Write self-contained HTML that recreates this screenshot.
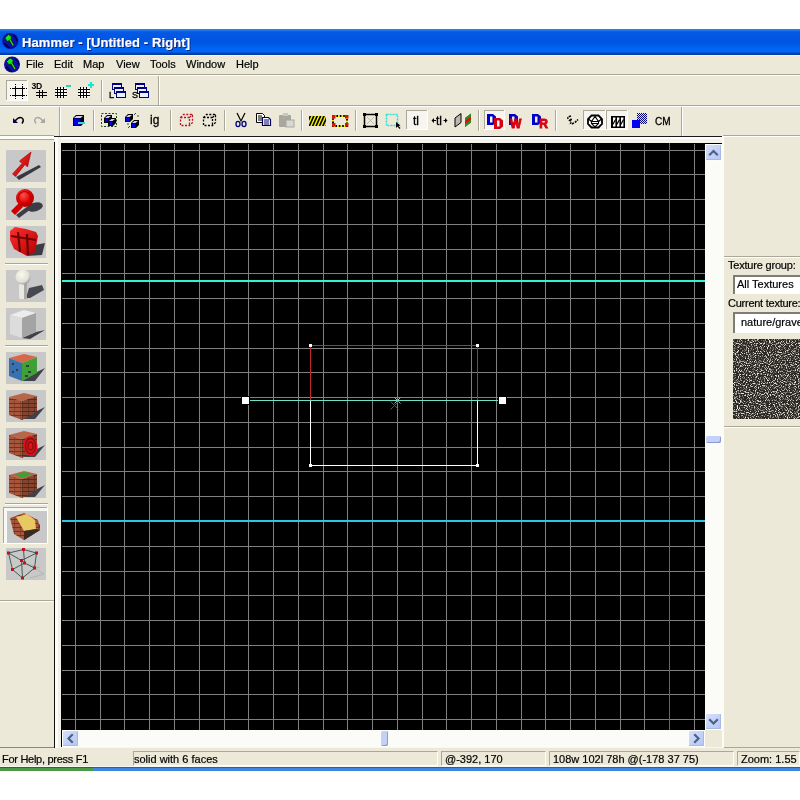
<!DOCTYPE html>
<html><head><meta charset="utf-8"><style>
html,body{margin:0;padding:0;width:800px;height:800px;overflow:hidden;background:#fff;}
body>div,body>span,body>svg{position:absolute;}
.t{position:absolute;font-family:"Liberation Sans",sans-serif;white-space:nowrap;line-height:13px;will-change:transform;-webkit-text-stroke:0.2px currentColor;}
</style></head><body>
<div style="left:0;top:29px;width:800px;height:26px;background:linear-gradient(to bottom,#3168c8 0px,#3188f2 1px,#0c64e8 2px,#0458e4 4px,#0055e2 12px,#005ae8 16px,#0064f4 19px,#0066f6 23px,#0048bc 24px,#003aa0 25px,#003aa0 26px)"></div>
<span class="t" style="left:22px;top:36px;font-size:13px;color:#fff;font-weight:bold;text-shadow:1px 1px 0 #0a1e7a;letter-spacing:0.1px">Hammer - [Untitled - Right]</span>
<div style="left:0px;top:55px;width:800px;height:20px;background:#ece9d8;"></div>
<div style="left:0px;top:55px;width:800px;height:1px;background:#f4f6fb;"></div>
<div style="left:0px;top:74px;width:800px;height:1px;background:#aca899;"></div>
<div style="left:0px;top:75px;width:800px;height:1px;background:#ffffff;"></div>
<span class="t" style="left:26px;top:58px;font-size:11px;color:#000;font-weight:normal;">File</span>
<span class="t" style="left:54px;top:58px;font-size:11px;color:#000;font-weight:normal;">Edit</span>
<span class="t" style="left:83px;top:58px;font-size:11px;color:#000;font-weight:normal;">Map</span>
<span class="t" style="left:116px;top:58px;font-size:11px;color:#000;font-weight:normal;">View</span>
<span class="t" style="left:150px;top:58px;font-size:11px;color:#000;font-weight:normal;">Tools</span>
<span class="t" style="left:186px;top:58px;font-size:11px;color:#000;font-weight:normal;">Window</span>
<span class="t" style="left:236px;top:58px;font-size:11px;color:#000;font-weight:normal;">Help</span>
<div style="left:0px;top:76px;width:800px;height:60px;background:#ece9d8;"></div>
<div style="left:0px;top:105px;width:800px;height:1px;background:#aca899;"></div>
<div style="left:0px;top:106px;width:800px;height:1px;background:#fff;"></div>
<div style="left:158px;top:76px;width:1px;height:29px;background:#aca899;"></div>
<div style="left:159px;top:76px;width:1px;height:29px;background:#fff;"></div>
<div style="left:59px;top:107px;width:1px;height:29px;background:#aca899;"></div>
<div style="left:60px;top:107px;width:1px;height:29px;background:#fff;"></div>
<div style="left:681px;top:107px;width:1px;height:29px;background:#aca899;"></div>
<div style="left:682px;top:107px;width:1px;height:29px;background:#fff;"></div>
<div style="left:54px;top:136px;width:668px;height:1px;background:#1a1a1a;"></div>
<div style="left:0px;top:135px;width:54px;height:1px;background:#aca899;"></div>
<div style="left:0px;top:136px;width:54px;height:1px;background:#fdfdf8;"></div>
<div style="left:723px;top:135px;width:77px;height:1px;background:#aca899;"></div>
<div style="left:723px;top:136px;width:77px;height:1px;background:#fff;"></div>
<div style="left:0px;top:137px;width:800px;height:613px;background:#ece9d8;"></div>
<div style="left:0px;top:137px;width:722px;height:2px;background:#fdfdf8;"></div>
<div style="left:0px;top:139px;width:54px;height:1px;background:#aca899;"></div>
<div style="left:0px;top:600px;width:54px;height:1px;background:#aca899;"></div>
<div style="left:0px;top:601px;width:54px;height:1px;background:#fff;"></div>
<div style="left:54px;top:142px;width:1px;height:606px;background:#111;"></div>
<div style="left:0px;top:747px;width:54px;height:1px;background:#8a8878;"></div>
<div style="left:55px;top:137px;width:667px;height:6px;background:#f4f3ec;"></div>
<div style="left:55px;top:137px;width:667px;height:2px;background:#fdfdf9;"></div>
<div style="left:55px;top:137px;width:6px;height:611px;background:#f2f1e8;"></div>
<div style="left:55px;top:137px;width:3px;height:611px;background:#fdfdf9;"></div>
<div style="left:61px;top:143px;width:661px;height:1px;background:#000;"></div>
<div style="left:61px;top:143px;width:1px;height:605px;background:#000;"></div>
<div style="left:62px;top:143px;width:643px;height:587px;background:#000;"></div>
<div style="left:705px;top:144px;width:17px;height:586px;background:#fbfbf8;"></div>
<div style="left:62px;top:730px;width:643px;height:17px;background:#fbfbf8;"></div>
<div style="left:705px;top:730px;width:18px;height:17px;background:#ece9d8;"></div>
<div style="left:722px;top:137px;width:2px;height:611px;background:#fdfdf8;"></div>
<div style="left:61px;top:747px;width:663px;height:1px;background:#f8f8f2;"></div>
<div style="left:724px;top:747px;width:76px;height:1px;background:#aca899;"></div>
<div style="left:724px;top:256px;width:76px;height:1px;background:#aca899;"></div>
<div style="left:724px;top:257px;width:76px;height:1px;background:#fff;"></div>
<div style="left:724px;top:426px;width:76px;height:1px;background:#aca899;"></div>
<div style="left:724px;top:427px;width:76px;height:1px;background:#fff;"></div>
<span class="t" style="left:728px;top:259px;font-size:11px;color:#000;font-weight:normal;letter-spacing:-0.2px">Texture group:</span>
<div style="left:733px;top:275px;width:67px;height:19px;background:#fff;border-left:2px solid #7f7d72;border-top:2px solid #7f7d72;box-sizing:border-box"></div>
<span class="t" style="left:737px;top:278px;font-size:11px;color:#000;font-weight:normal;">All Textures</span>
<span class="t" style="left:728px;top:297px;font-size:11px;color:#000;font-weight:normal;letter-spacing:-0.25px">Current texture:</span>
<div style="left:733px;top:312px;width:67px;height:21px;background:#fff;border-left:2px solid #7f7d72;border-top:2px solid #7f7d72;box-sizing:border-box"></div>
<span class="t" style="left:741px;top:316px;font-size:11px;color:#000;font-weight:normal;">nature/gravel</span>
<svg style="left:733px;top:339px" width="67" height="80"><filter id="nz" x="0" y="0" width="100%" height="100%"><feTurbulence type="fractalNoise" baseFrequency="0.9" numOctaves="2" seed="3"/><feColorMatrix values="0 0 0 0 0.8  0 0 0 0 0.78  0 0 0 0 0.7  0 0 0 4.5 -2.2"/></filter><rect width="67" height="80" fill="#2a2722"/><rect width="67" height="80" filter="url(#nz)"/></svg>
<div style="left:0px;top:748px;width:800px;height:19px;background:#ece9d8;"></div>
<span class="t" style="left:2px;top:753px;font-size:11px;color:#000;font-weight:normal;letter-spacing:-0.28px">For Help, press F1</span>
<div style="left:133px;top:751px;width:305px;height:15px;background:transparent;border-left:1px solid #aca899;border-top:1px solid #aca899;border-right:1px solid #fff;border-bottom:1px solid #fff;box-sizing:border-box"></div>
<div style="left:441px;top:751px;width:105px;height:15px;background:transparent;border-left:1px solid #aca899;border-top:1px solid #aca899;border-right:1px solid #fff;border-bottom:1px solid #fff;box-sizing:border-box"></div>
<div style="left:549px;top:751px;width:185px;height:15px;background:transparent;border-left:1px solid #aca899;border-top:1px solid #aca899;border-right:1px solid #fff;border-bottom:1px solid #fff;box-sizing:border-box"></div>
<div style="left:737px;top:751px;width:63px;height:15px;background:transparent;border-left:1px solid #aca899;border-top:1px solid #aca899;border-right:1px solid #fff;border-bottom:1px solid #fff;box-sizing:border-box"></div>
<span class="t" style="left:134px;top:753px;font-size:11px;color:#000;font-weight:normal;">solid with 6 faces</span>
<span class="t" style="left:445px;top:753px;font-size:11px;color:#000;font-weight:normal;">@-392, 170</span>
<span class="t" style="left:553px;top:753px;font-size:11px;color:#000;font-weight:normal;">108w 102l 78h @(-178 37 75)</span>
<span class="t" style="left:741px;top:753px;font-size:11px;color:#000;font-weight:normal;">Zoom: 1.55</span>
<div style="left:0px;top:766px;width:800px;height:1px;background:#f6f6f0;"></div>
<div style="left:0px;top:767px;width:93px;height:1px;background:#2c6a2a;"></div>
<div style="left:0px;top:768px;width:93px;height:3px;background:#4c9a48;"></div>
<div style="left:93px;top:767px;width:707px;height:1px;background:#2c5cb4;"></div>
<div style="left:93px;top:768px;width:707px;height:3px;background:#3f86e0;"></div>
<svg style="left:0;top:0" width="800" height="800" shape-rendering="crispEdges"><rect x="75" y="144" width="1" height="586" fill="#808080"/><rect x="100" y="144" width="1" height="586" fill="#808080"/><rect x="124" y="144" width="1" height="586" fill="#808080"/><rect x="149" y="144" width="1" height="586" fill="#808080"/><rect x="174" y="144" width="1" height="586" fill="#808080"/><rect x="199" y="144" width="1" height="586" fill="#808080"/><rect x="224" y="144" width="1" height="586" fill="#808080"/><rect x="248" y="144" width="1" height="586" fill="#808080"/><rect x="273" y="144" width="1" height="586" fill="#808080"/><rect x="298" y="144" width="1" height="586" fill="#808080"/><rect x="323" y="144" width="1" height="586" fill="#808080"/><rect x="347" y="144" width="1" height="586" fill="#808080"/><rect x="372" y="144" width="1" height="586" fill="#808080"/><rect x="397" y="144" width="1" height="586" fill="#808080"/><rect x="422" y="144" width="1" height="586" fill="#808080"/><rect x="446" y="144" width="1" height="586" fill="#808080"/><rect x="471" y="144" width="1" height="586" fill="#808080"/><rect x="496" y="144" width="1" height="586" fill="#808080"/><rect x="521" y="144" width="1" height="586" fill="#808080"/><rect x="545" y="144" width="1" height="586" fill="#808080"/><rect x="570" y="144" width="1" height="586" fill="#808080"/><rect x="595" y="144" width="1" height="586" fill="#808080"/><rect x="620" y="144" width="1" height="586" fill="#808080"/><rect x="644" y="144" width="1" height="586" fill="#808080"/><rect x="669" y="144" width="1" height="586" fill="#808080"/><rect x="694" y="144" width="1" height="586" fill="#808080"/><rect x="62" y="150" width="643" height="1" fill="#808080"/><rect x="62" y="174" width="643" height="1" fill="#808080"/><rect x="62" y="199" width="643" height="1" fill="#808080"/><rect x="62" y="224" width="643" height="1" fill="#808080"/><rect x="62" y="249" width="643" height="1" fill="#808080"/><rect x="62" y="273" width="643" height="1" fill="#808080"/><rect x="62" y="298" width="643" height="1" fill="#808080"/><rect x="62" y="323" width="643" height="1" fill="#808080"/><rect x="62" y="348" width="643" height="1" fill="#808080"/><rect x="62" y="372" width="643" height="1" fill="#808080"/><rect x="62" y="397" width="643" height="1" fill="#808080"/><rect x="62" y="422" width="643" height="1" fill="#808080"/><rect x="62" y="447" width="643" height="1" fill="#808080"/><rect x="62" y="471" width="643" height="1" fill="#808080"/><rect x="62" y="496" width="643" height="1" fill="#808080"/><rect x="62" y="521" width="643" height="1" fill="#808080"/><rect x="62" y="546" width="643" height="1" fill="#808080"/><rect x="62" y="571" width="643" height="1" fill="#808080"/><rect x="62" y="595" width="643" height="1" fill="#808080"/><rect x="62" y="620" width="643" height="1" fill="#808080"/><rect x="62" y="645" width="643" height="1" fill="#808080"/><rect x="62" y="670" width="643" height="1" fill="#808080"/><rect x="62" y="694" width="643" height="1" fill="#808080"/><rect x="62" y="719" width="643" height="1" fill="#808080"/><rect x="669" y="143" width="1" height="587" fill="#3a7a6c"/><rect x="62" y="280" width="643" height="2" fill="#30f4d0"/><rect x="62" y="520" width="643" height="2" fill="#28c8e6"/><rect x="310" y="345" width="168" height="1" fill="#c02828"/><rect x="310" y="345" width="1" height="56" fill="#c02828"/><rect x="477" y="345" width="1" height="56" fill="#c02828"/><rect x="310" y="401" width="1" height="65" fill="#fff"/><rect x="477" y="401" width="1" height="65" fill="#fff"/><rect x="310" y="465" width="168" height="1" fill="#fff"/><rect x="250" y="400" width="248" height="1" fill="#70e0c8"/><rect x="309" y="344" width="3" height="3" fill="#fff"/><rect x="476" y="344" width="3" height="3" fill="#fff"/><rect x="309" y="464" width="3" height="3" fill="#fff"/><rect x="476" y="464" width="3" height="3" fill="#fff"/><rect x="241" y="396" width="9" height="9" fill="#000"/><rect x="242" y="397" width="7" height="7" fill="#fff"/><rect x="498" y="396" width="9" height="9" fill="#000"/><rect x="499" y="397" width="7" height="7" fill="#fff"/><path d="M394.5 397.5 L400.5 403.5 M400.5 397.5 L394.5 403.5" stroke="#40e0e0" stroke-width="1" shape-rendering="auto"/><path d="M390.5 401.5 L398.5 409.5 M398.5 401.5 L390.5 409.5" stroke="#c02830" stroke-width="1" shape-rendering="auto"/></svg>
<div style="left:705px;top:144px;width:17px;height:17px;background:#fdfdfb;"></div>
<div style="left:706px;top:145px;width:15px;height:15px;background:linear-gradient(135deg,#d6e0fb,#c0cff7 60%,#b6c6f2);border-radius:1px;box-shadow:inset -1px -1px 0 #a9b9e3"></div>
<svg style="left:705px;top:144px" width="17" height="17"><path d="M5 10.5 L8.5 7 L12 10.5" fill="none" stroke="#4d6185" stroke-width="2.2" stroke-linecap="square"/></svg>
<div style="left:705px;top:713px;width:17px;height:17px;background:#fdfdfb;"></div>
<div style="left:706px;top:714px;width:15px;height:15px;background:linear-gradient(135deg,#d6e0fb,#c0cff7 60%,#b6c6f2);border-radius:1px;box-shadow:inset -1px -1px 0 #a9b9e3"></div>
<svg style="left:705px;top:713px" width="17" height="17"><path d="M5 7 L8.5 10.5 L12 7" fill="none" stroke="#4d6185" stroke-width="2.2" stroke-linecap="square"/></svg>
<div style="left:62px;top:730px;width:17px;height:17px;background:#fdfdfb;"></div>
<div style="left:63px;top:731px;width:15px;height:15px;background:linear-gradient(135deg,#d6e0fb,#c0cff7 60%,#b6c6f2);border-radius:1px;box-shadow:inset -1px -1px 0 #a9b9e3"></div>
<svg style="left:62px;top:730px" width="17" height="17"><path d="M10 5 L6.5 8.5 L10 12" fill="none" stroke="#4d6185" stroke-width="2.2" stroke-linecap="square"/></svg>
<div style="left:688px;top:730px;width:17px;height:17px;background:#fdfdfb;"></div>
<div style="left:689px;top:731px;width:15px;height:15px;background:linear-gradient(135deg,#d6e0fb,#c0cff7 60%,#b6c6f2);border-radius:1px;box-shadow:inset -1px -1px 0 #a9b9e3"></div>
<svg style="left:688px;top:730px" width="17" height="17"><path d="M7 5 L10.5 8.5 L7 12" fill="none" stroke="#4d6185" stroke-width="2.2" stroke-linecap="square"/></svg>
<div style="left:381px;top:731px;width:7px;height:15px;background:#c4d0f6;box-shadow:inset -1px -1px 0 #8a9acb;border-radius:2px"></div>
<div style="left:706px;top:436px;width:15px;height:7px;background:#c4d0f6;box-shadow:inset -1px -1px 0 #8a9acb;border-radius:2px"></div>
<div style="left:5px;top:263px;width:43px;height:1px;background:#aca899;"></div>
<div style="left:5px;top:264px;width:43px;height:1px;background:#fff;"></div>
<div style="left:5px;top:345px;width:43px;height:1px;background:#aca899;"></div>
<div style="left:5px;top:346px;width:43px;height:1px;background:#fff;"></div>
<div style="left:5px;top:503px;width:43px;height:1px;background:#aca899;"></div>
<div style="left:5px;top:504px;width:43px;height:1px;background:#fff;"></div>
<svg style="left:0;top:0" width="800" height="800"><circle cx="10.3" cy="41" r="8" fill="#0e0ea8"/><path d="M4.300000000000001 43.0 q3.0 4.0 6.0 5.0 M13.3 35.0 q3.0 2.0 4.0 6.0" stroke="#000050" stroke-width="1.6" fill="none"/><path d="M4.800000000000001 38.0 L8.3 34.5 L11.3 36.0 L11.3 40.0 L7.300000000000001 41.5 Z" fill="#10e818" stroke="#002000" stroke-width="0.8"/><path d="M9.8 39.5 L13.3 45.5" stroke="#002000" stroke-width="2.6"/><path d="M9.8 39.5 L13.3 45.5" stroke="#30e030" stroke-width="1.4"/><circle cx="12" cy="64.5" r="8" fill="#0e0ea8"/><path d="M6.0 66.5 q3.0 4.0 6.0 5.0 M15.0 58.5 q3.0 2.0 4.0 6.0" stroke="#000050" stroke-width="1.6" fill="none"/><path d="M6.5 61.5 L10.0 58.0 L13.0 59.5 L13.0 63.5 L9.0 65.0 Z" fill="#10e818" stroke="#002000" stroke-width="0.8"/><path d="M11.5 63.0 L15.0 69.0" stroke="#002000" stroke-width="2.6"/><path d="M11.5 63.0 L15.0 69.0" stroke="#30e030" stroke-width="1.4"/><rect x="6" y="80" width="22" height="21" fill="#f6f5f0"/><rect x="6" y="80" width="22" height="1" fill="#aca899"/><rect x="6" y="80" width="1" height="21" fill="#aca899"/><rect x="6" y="100" width="22" height="1" fill="#fff"/><rect x="27" y="80" width="1" height="21" fill="#fff"/><rect x="12" y="88" width="13" height="1" fill="#000"/><rect x="12" y="95" width="13" height="1" fill="#000"/><rect x="15" y="86" width="1" height="11" fill="#000"/><rect x="22" y="86" width="1" height="11" fill="#000"/><rect x="10" y="88" width="1" height="1" fill="#000"/><rect x="26" y="88" width="1" height="1" fill="#000"/><rect x="10" y="95" width="1" height="1" fill="#000"/><rect x="26" y="95" width="1" height="1" fill="#000"/><rect x="15" y="84" width="1" height="1" fill="#000"/><rect x="22" y="84" width="1" height="1" fill="#000"/><rect x="15" y="98" width="1" height="1" fill="#000"/><rect x="22" y="98" width="1" height="1" fill="#000"/><text x="31.6" y="89" font-family="Liberation Sans" font-weight="bold" font-size="8.6" fill="#000" letter-spacing="-0.3">3D</text><rect x="39" y="90" width="1" height="8" fill="#000"/><rect x="42" y="90" width="1" height="8" fill="#000"/><rect x="36" y="92" width="11" height="1" fill="#000"/><rect x="36" y="95" width="11" height="1" fill="#000"/><rect x="56" y="88" width="10" height="9" fill="#fff"/><rect x="57" y="87" width="1" height="11" fill="#000"/><rect x="60" y="87" width="1" height="11" fill="#000"/><rect x="63" y="87" width="1" height="11" fill="#000"/><rect x="55" y="89" width="12" height="1" fill="#000"/><rect x="55" y="92" width="12" height="1" fill="#000"/><rect x="55" y="95" width="12" height="1" fill="#000"/><rect x="66" y="85" width="5" height="2" fill="#30d0b0"/><rect x="79" y="88" width="10" height="9" fill="#fff"/><rect x="80" y="87" width="1" height="11" fill="#000"/><rect x="83" y="87" width="1" height="11" fill="#000"/><rect x="86" y="87" width="1" height="11" fill="#000"/><rect x="78" y="89" width="12" height="1" fill="#000"/><rect x="78" y="92" width="12" height="1" fill="#000"/><rect x="78" y="95" width="12" height="1" fill="#000"/><rect x="88" y="84" width="6" height="2" fill="#10e8d8"/><rect x="90" y="82" width="2" height="6" fill="#10e8d8"/><rect x="101" y="80" width="1" height="22" fill="#aca899"/><rect x="102" y="80" width="1" height="22" fill="#fff"/><text x="109" y="98" font-family="Liberation Sans" font-size="9" fill="#000" stroke="#000" stroke-width="0.35">L</text><rect x="112.5" y="83.5" width="9" height="6" fill="#e8f0ff" stroke="#000080" stroke-width="1"/><rect x="112" y="83" width="10" height="2" fill="#000080"/><rect x="114.5" y="87.5" width="9" height="6" fill="#e8f0ff" stroke="#000080" stroke-width="1"/><rect x="114" y="87" width="10" height="2" fill="#000080"/><rect x="116.5" y="91.5" width="9" height="6" fill="#e8f0ff" stroke="#000080" stroke-width="1"/><rect x="116" y="91" width="10" height="2" fill="#000080"/><text x="132" y="98" font-family="Liberation Sans" font-size="9" fill="#000" stroke="#000" stroke-width="0.35">S</text><rect x="135.5" y="83.5" width="9" height="6" fill="#e8f0ff" stroke="#000080" stroke-width="1"/><rect x="135" y="83" width="10" height="2" fill="#000080"/><rect x="137.5" y="87.5" width="9" height="6" fill="#e8f0ff" stroke="#000080" stroke-width="1"/><rect x="137" y="87" width="10" height="2" fill="#000080"/><rect x="139.5" y="91.5" width="9" height="6" fill="#e8f0ff" stroke="#000080" stroke-width="1"/><rect x="139" y="91" width="10" height="2" fill="#000080"/><path d="M13 118 L13 123 L18 123 Z" fill="#000060"/><path d="M15 121 Q19 116 22 118 Q24.5 120 22 123.5" fill="none" stroke="#000" stroke-width="1.5"/><path d="M45 118 L45 123 L40 123 Z" fill="#a8a8a0"/><path d="M43 121 Q39 116 36 118 Q33.5 120 36 123.5" fill="none" stroke="#a8a8a0" stroke-width="1.5"/><path d="M73 118 L76 115 L84 115 L84 123 L81 126 L73 126 Z" fill="#000000"/><path d="M74 118 L76.5 116 L83 116 L80.5 118 Z" fill="#d8d0f4"/><rect x="74" y="118.5" width="6.5" height="6.5" fill="#0000e0"/><rect x="78" y="122" width="7" height="2" fill="#30d8d8"/><rect x="93" y="110" width="1" height="21" fill="#aca899"/><rect x="94" y="110" width="1" height="21" fill="#fff"/><rect x="101.5" y="113.5" width="15" height="13" fill="none" stroke="#204010" stroke-width="1" stroke-dasharray="2 1.5"/><path d="M104 118 L107 115 L112 115 L112 120 L109 123 L104 123 Z" fill="#000000"/><path d="M105 118 L107.5 116 L111 116 L108.5 118 Z" fill="#d8d0f4"/><rect x="105" y="118.5" width="3.5" height="3.5" fill="#0000e0"/><path d="M108 121 L111 118 L116 118 L116 123 L113 126 L108 126 Z" fill="#000000"/><path d="M109 121 L111.5 119 L115 119 L112.5 121 Z" fill="#d8d0f4"/><rect x="109" y="121.5" width="3.5" height="3.5" fill="#0000e0"/><path d="M125 117 L128 114 L133 114 L133 119 L130 122 L125 122 Z" fill="#000000"/><path d="M126 117 L128.5 115 L132 115 L129.5 117 Z" fill="#d8d0f4"/><rect x="126" y="117.5" width="3.5" height="3.5" fill="#0000e0"/><path d="M131 123 L134 120 L139 120 L139 125 L136 128 L131 128 Z" fill="#000000"/><path d="M132 123 L134.5 121 L138 121 L135.5 123 Z" fill="#d8d0f4"/><rect x="132" y="123.5" width="3.5" height="3.5" fill="#0000e0"/><path d="M134 115 L136 113 M137 116 L139 116 M127 124 L129 124 M130 126 L128 128" stroke="#305030" stroke-width="1"/><text x="150" y="124" font-family="Liberation Sans" font-size="12" fill="#000" stroke="#000" stroke-width="0.3">ig</text><rect x="170" y="110" width="1" height="21" fill="#aca899"/><rect x="171" y="110" width="1" height="21" fill="#fff"/><path d="M180.5 117.5 L183.5 114.5 L192.5 114.5 L192.5 122.5 L189.5 125.5 L180.5 125.5 Z M180.5 117.5 L189.5 117.5 L189.5 125.5 M189.5 117.5 L192.5 114.5" fill="none" stroke="#c01020" stroke-width="1.3" stroke-dasharray="2 1.5"/><path d="M203.5 117.5 L206.5 114.5 L215.5 114.5 L215.5 122.5 L212.5 125.5 L203.5 125.5 Z M203.5 117.5 L212.5 117.5 L212.5 125.5 M212.5 117.5 L215.5 114.5" fill="none" stroke="#000" stroke-width="1.3" stroke-dasharray="2 1.5"/><rect x="224" y="110" width="1" height="21" fill="#aca899"/><rect x="225" y="110" width="1" height="21" fill="#fff"/><path d="M237 113 L241 121 L245 113" fill="none" stroke="#000" stroke-width="1.2"/><ellipse cx="238" cy="124" rx="2" ry="2.6" fill="none" stroke="#000080" stroke-width="1.3"/><ellipse cx="244" cy="124" rx="2" ry="2.6" fill="none" stroke="#000080" stroke-width="1.3"/><path d="M256.5 113.5 L262.5 113.5 L264.5 115.5 L264.5 122.5 L256.5 122.5 Z" fill="#fff" stroke="#000" stroke-width="1"/><path d="M258 116h4M258 118h4M258 120h4" stroke="#000" stroke-width="1"/><path d="M262.5 117.5 L268.5 117.5 L270.5 119.5 L270.5 125.5 L262.5 125.5 Z" fill="#fff" stroke="#000060" stroke-width="1.2"/><path d="M264 120h5M264 122h5M264 124h5" stroke="#000060" stroke-width="1"/><rect x="279" y="115" width="12" height="12" rx="1" fill="#a8a8a0"/><rect x="283" y="113" width="5" height="3" fill="#c8c8c0"/><rect x="286" y="120" width="8" height="7" fill="#d8d8d0" stroke="#a8a8a0"/><rect x="301" y="110" width="1" height="21" fill="#aca899"/><rect x="302" y="110" width="1" height="21" fill="#fff"/><clipPath id="hzc"><rect x="309" y="116" width="17" height="10"/></clipPath><g clip-path="url(#hzc)"><rect x="309" y="116" width="17" height="10" fill="#f4f000"/><path d="M305.0 126 L309.5 116 L311.3 116 L306.8 126 Z" fill="#000"/><path d="M308.4 126 L312.9 116 L314.7 116 L310.2 126 Z" fill="#000"/><path d="M311.8 126 L316.3 116 L318.1 116 L313.6 126 Z" fill="#000"/><path d="M315.2 126 L319.7 116 L321.5 116 L317.0 126 Z" fill="#000"/><path d="M318.6 126 L323.1 116 L324.90000000000003 116 L320.40000000000003 126 Z" fill="#000"/><path d="M322.0 126 L326.5 116 L328.3 116 L323.8 126 Z" fill="#000"/><path d="M325.4 126 L329.9 116 L331.7 116 L327.2 126 Z" fill="#000"/></g><rect x="333" y="116" width="14" height="10" fill="none" stroke="#f4f000" stroke-width="2"/><rect x="333" y="116" width="14" height="10" fill="none" stroke="#000" stroke-width="2" stroke-dasharray="1.6 1.8"/><rect x="332" y="115" width="3.5" height="3.5" fill="#e01010"/><rect x="345" y="115" width="3.5" height="3.5" fill="#e01010"/><rect x="332" y="123" width="3.5" height="3.5" fill="#e01010"/><rect x="345" y="123" width="3.5" height="3.5" fill="#e01010"/><rect x="355" y="110" width="1" height="21" fill="#aca899"/><rect x="356" y="110" width="1" height="21" fill="#fff"/><rect x="364.5" y="114.5" width="12" height="12" fill="none" stroke="#000" stroke-width="1.5"/><path d="M367 117 L374 124 M374 117 L367 124" stroke="#b0b0a8" stroke-width="0.8"/><rect x="363" y="113" width="3" height="3" fill="#000"/><rect x="375" y="113" width="3" height="3" fill="#000"/><rect x="363" y="125" width="3" height="3" fill="#000"/><rect x="375" y="125" width="3" height="3" fill="#000"/><rect x="386.5" y="114.5" width="11" height="11" fill="none" stroke="#30e0d0" stroke-width="1.5" stroke-dasharray="2 1"/><path d="M396 122 L396 128 L397.5 126.5 L399.5 129 L400.5 128 L398.5 126 L400.5 125.5 Z" fill="#000"/><rect x="406" y="110" width="22" height="20" fill="#f6f5f0"/><rect x="406" y="110" width="22" height="1" fill="#aca899"/><rect x="406" y="110" width="1" height="20" fill="#aca899"/><rect x="406" y="129" width="22" height="1" fill="#fff"/><rect x="427" y="110" width="1" height="20" fill="#fff"/><text x="413" y="125" font-family="Liberation Sans" font-size="12" fill="#000" stroke="#000" stroke-width="0.3">tl</text><text x="436" y="125" font-family="Liberation Sans" font-size="12" fill="#000" stroke="#000" stroke-width="0.3">tl</text><path d="M432 120.5 L436 120.5 M447 120.5 L443.5 120.5" stroke="#000" stroke-width="1"/><path d="M431.5 120.5 L434 118 L434 123 Z M447.5 120.5 L445 118 L445 123 Z" fill="#000"/><path d="M455 127 L455 118 L461 113.5 L461 122.5 Z" fill="#b8b8b0" stroke="#000" stroke-width="1"/><path d="M465 127 L465 118 L471 113.5 L471 122.5 Z" fill="#e01010"/><path d="M465 127 L465 121 L471 116.5 L471 113.5 L465 118 Z" fill="#10a020" opacity="0.9"/><path d="M465 127 L471 122.5 L471 120 L465 124 Z" fill="#10a020"/><rect x="478" y="110" width="1" height="21" fill="#aca899"/><rect x="479" y="110" width="1" height="21" fill="#fff"/><rect x="484" y="110" width="21" height="20" fill="#f6f5f0"/><rect x="484" y="110" width="21" height="1" fill="#aca899"/><rect x="484" y="110" width="1" height="20" fill="#aca899"/><rect x="484" y="129" width="21" height="1" fill="#fff"/><rect x="504" y="110" width="1" height="20" fill="#fff"/><path fill-rule="evenodd" d="M487 114 h6 l3 2.5 v6 l-3 2.5 h-6 Z M490 116.5 h2.5 v6 h-2.5 Z" fill="#0000c8"/><path fill-rule="evenodd" d="M494 118 h6 l3 2.5 v6 l-3 2.5 h-6 Z M497 120.5 h2.5 v6 h-2.5 Z" fill="#d80010"/><path fill-rule="evenodd" d="M509 114 h6 l3 2.5 v6 l-3 2.5 h-6 Z M512 116.5 h2.5 v6 h-2.5 Z" fill="#0000c8"/><text x="510" y="127.5" font-family="Liberation Sans" font-weight="bold" font-size="12" fill="#d80010" stroke="#d80010" stroke-width="0.9">W</text><path fill-rule="evenodd" d="M532 114 h6 l3 2.5 v6 l-3 2.5 h-6 Z M535 116.5 h2.5 v6 h-2.5 Z" fill="#0000c8"/><text x="539.3" y="127.5" font-family="Liberation Sans" font-weight="bold" font-size="12" fill="#d80010" stroke="#d80010" stroke-width="0.9">R</text><rect x="555" y="110" width="1" height="21" fill="#aca899"/><rect x="556" y="110" width="1" height="21" fill="#fff"/><path d="M571 116 Q566 117 569 120 Q573 122 569 124.5 M572 124 Q576 122 578 119.5" fill="none" stroke="#000" stroke-width="1.6" stroke-dasharray="2 1"/><circle cx="571" cy="119.5" r="1" fill="#000"/><rect x="583" y="110" width="23" height="20" fill="#f6f5f0"/><rect x="583" y="110" width="23" height="1" fill="#aca899"/><rect x="583" y="110" width="1" height="20" fill="#aca899"/><rect x="583" y="129" width="23" height="1" fill="#fff"/><rect x="605" y="110" width="1" height="20" fill="#fff"/><path d="M591.5 115.5 L598.5 115.5 L602 119 L602 124 L598.5 127.5 L591.5 127.5 L588 124 L588 119 Z" fill="#fff" stroke="#000" stroke-width="1.8"/><path d="M595 116.5 L591.5 121.5 L598.5 121.5 Z M591.5 121.5 L591.5 123.5 L595 127 L598.5 123.5 L598.5 121.5 M588.5 119 L591.5 121.5 M601.5 119 L598.5 121.5 M591.5 123.5 L598.5 123.5" fill="none" stroke="#000" stroke-width="1.1"/><rect x="606" y="110" width="22" height="20" fill="#f6f5f0"/><rect x="606" y="110" width="22" height="1" fill="#aca899"/><rect x="606" y="110" width="1" height="20" fill="#aca899"/><rect x="606" y="129" width="22" height="1" fill="#fff"/><rect x="627" y="110" width="1" height="20" fill="#fff"/><rect x="611" y="116" width="14" height="12" fill="#000"/><rect x="613" y="117.5" width="2.4" height="9" fill="#fff"/><path d="M612.8 124.5 L615.6 119.5" stroke="#000" stroke-width="1.3"/><rect x="617" y="117.5" width="2.4" height="9" fill="#fff"/><path d="M616.8 124.5 L619.6 119.5" stroke="#000" stroke-width="1.3"/><rect x="621" y="117.5" width="2.4" height="9" fill="#fff"/><path d="M620.8 124.5 L623.6 119.5" stroke="#000" stroke-width="1.3"/><defs><pattern id="ck" width="2" height="2" patternUnits="userSpaceOnUse"><rect width="2" height="2" fill="#e0e0f0"/><rect width="1" height="1" fill="#000080"/><rect x="1" y="1" width="1" height="1" fill="#000080"/></pattern></defs><rect x="637" y="113" width="10" height="11" fill="url(#ck)"/><rect x="632" y="120" width="8" height="8" fill="#0000f0"/><text x="655" y="124.5" font-family="Liberation Sans" font-size="10" fill="#000" stroke="#000" stroke-width="0.3">CM</text><defs><linearGradient id="rd" x1="0" y1="0" x2="1" y2="1"><stop offset="0" stop-color="#ff3030"/><stop offset="1" stop-color="#b00000"/></linearGradient><radialGradient id="rb" cx="0.4" cy="0.35" r="0.7"><stop offset="0" stop-color="#ff5050"/><stop offset="0.6" stop-color="#e00000"/><stop offset="1" stop-color="#a00000"/></radialGradient><radialGradient id="wb" cx="0.4" cy="0.35" r="0.7"><stop offset="0" stop-color="#fbfbe8"/><stop offset="0.7" stop-color="#e0e0d8"/><stop offset="1" stop-color="#909090"/></radialGradient><pattern id="brk" width="6" height="4" patternUnits="userSpaceOnUse"><rect width="6" height="4" fill="#a8553a"/><rect y="3" width="6" height="1" fill="#6e3420"/><rect x="2" width="1" height="3" fill="#8a4430"/></pattern><pattern id="brkd" width="6" height="4" patternUnits="userSpaceOnUse"><rect width="6" height="4" fill="#844430"/><rect y="3" width="6" height="1" fill="#56281a"/><rect x="4" width="1" height="3" fill="#683422"/></pattern></defs><rect x="3" y="507" width="45" height="37" fill="#f8f8f4"/><rect x="3" y="507" width="45" height="1" fill="#aca899"/><rect x="3" y="507" width="1" height="37" fill="#aca899"/><rect x="3" y="543" width="45" height="1" fill="#fff"/><rect x="47" y="507" width="1" height="37" fill="#fff"/><rect x="6" y="150" width="40" height="32" fill="#c8c8c8"/><rect x="6" y="188" width="40" height="32" fill="#c8c8c8"/><rect x="6" y="226" width="40" height="32" fill="#c8c8c8"/><rect x="6" y="270" width="40" height="32" fill="#c8c8c8"/><rect x="6" y="308" width="40" height="32" fill="#c8c8c8"/><rect x="6" y="352" width="40" height="32" fill="#c8c8c8"/><rect x="6" y="390" width="40" height="32" fill="#c8c8c8"/><rect x="6" y="428" width="40" height="32" fill="#c8c8c8"/><rect x="6" y="466" width="40" height="32" fill="#c8c8c8"/><rect x="6" y="548" width="40" height="32" fill="#c8c8c8"/><rect x="7" y="511" width="40" height="32" fill="#c8c8c8"/><path d="M16 177 L39 165 L41 167 L19 180 Z" fill="#38383e"/><path d="M12.5 174 L22 163.5 L19.5 161 L31 152 L27.5 167 L25 164.5 L15.5 176.5 Z" fill="url(#rd)" stroke="#a00000" stroke-width="0.6"/><ellipse cx="35" cy="207" rx="8" ry="4.5" fill="#3c3c44" transform="rotate(-15 35 207)"/><path d="M16 215 L28 206 L31 209 L19 218 Z" fill="#3c3c44"/><path d="M11 211 L19 203 L23 207 L15 215 Z" fill="#d00000"/><circle cx="25" cy="198" r="9" fill="url(#rb)"/><circle cx="24.5" cy="197.5" r="6" fill="none" stroke="#b80000" stroke-width="1.2"/><path d="M30 246 L45 243 L42 255 L27 256 Z" fill="#3c3c44"/><path d="M10 231 L15 227 L26 229 L36 232 L38 236 L35 252 L27 256 L14 249 L10 240 Z" fill="url(#rd)"/><path d="M18 232 L20 252 M27 234 L28 255 M11 236 L36 240" stroke="#700000" stroke-width="2.2" fill="none"/><path d="M29 288 L42 285 L44 290 L30 298 L26 298 Z" fill="#484850"/><rect x="19" y="283" width="8" height="16" rx="2" fill="#e8e8e0"/><rect x="24" y="283" width="3" height="16" fill="#a8a8a8"/><circle cx="23" cy="277" r="7.5" fill="url(#wb)"/><path d="M22 338 L36 332 L45 330 L30 339 Z" fill="#404048"/><path d="M10 315 L24 310 L36 313 L22 318 Z" fill="#ececec"/><path d="M10 315 L22 318 L22 338 L10 334 Z" fill="#dcdcdc"/><path d="M22 318 L36 313 L36 332 L22 338 Z" fill="#a4a4a4"/><path d="M22 381 L37 372 L45 368 L35 381 Z" fill="#404048"/><path d="M9 358 L24 354 L37 357 L22 363 Z" fill="#d86848"/><path d="M9 358 L22 363 L22 381 L9 376 Z" fill="#3870b0"/><path d="M22 363 L37 357 L37 373 L22 381 Z" fill="#40a038"/><path d="M12 364 h2 M16 370 h2 M12 372 h2 M26 366 h3 M28 372 h3 M25 376 h3" stroke="#202830" stroke-width="1.5"/><path d="M22 419 L37 411 L45 407 L35 419 Z" fill="#404048"/><path d="M9 397 L24 393 L37 396 L22 401 Z" fill="#b8664a"/><path d="M9 397 L22 401 L22 420 L9 415 Z" fill="url(#brk)"/><path d="M22 401 L37 396 L37 412 L22 420 Z" fill="url(#brkd)"/><path d="M22 457 L37 449 L45 445 L35 457 Z" fill="#404048"/><path d="M9 435 L24 431 L37 434 L22 439 Z" fill="#b8664a"/><path d="M9 435 L22 439 L22 458 L9 453 Z" fill="url(#brk)"/><path d="M22 439 L37 434 L37 450 L22 458 Z" fill="url(#brkd)"/><ellipse cx="30.5" cy="446" rx="7" ry="10" fill="#e01018" transform="rotate(-10 30.5 446)"/><ellipse cx="30.5" cy="446" rx="5" ry="7.5" fill="none" stroke="#801010" stroke-width="1.3"/><ellipse cx="30.5" cy="446" rx="2.5" ry="4" fill="none" stroke="#801010" stroke-width="1.3"/><path d="M22 497 L37 489 L45 485 L35 497 Z" fill="#404048"/><path d="M9 475 L24 471 L37 474 L22 479 Z" fill="#b8664a"/><path d="M9 475 L22 479 L22 498 L9 493 Z" fill="url(#brk)"/><path d="M22 479 L37 474 L37 490 L22 498 Z" fill="url(#brkd)"/><path d="M15 475 L24 472 L32 474 L23 478 Z" fill="#40a030"/><path d="M24 540 L40 530 L40 524 Z" fill="#403028"/><path d="M10 518 L24 513 L38 520 L40 530 L24 540 L14 534 Z" fill="url(#brk)"/><path d="M16 517 L27 514 L35 520 L36 529 L24 531 Z" fill="#e8c860"/><path d="M24 531 L36 529 L40 530 L24 540 Z" fill="#3a2a20"/><path d="M24 563 L40 568 M34 568 L44 574 L30 578" stroke="#b0b8b0" stroke-width="1" fill="none"/><path d="M23.5 549.5 L8.5 553 L21.5 560.5 L36.5 553 Z M8.5 553 L12.5 569.5 L22.5 578 L34.5 568 L36.5 553 M21.5 560.5 L22.5 578 M23.5 549.5 L24.5 563 L12.5 569.5 M24.5 563 L34.5 568" stroke="#406050" stroke-width="1" fill="none"/><rect x="22.0" y="548.0" width="3" height="3" fill="#c01020"/><rect x="7.0" y="551.5" width="3" height="3" fill="#c01020"/><rect x="35.0" y="551.5" width="3" height="3" fill="#c01020"/><rect x="20.0" y="559.0" width="3" height="3" fill="#c01020"/><rect x="23.0" y="561.5" width="3" height="3" fill="#c01020"/><rect x="11.0" y="568.0" width="3" height="3" fill="#c01020"/><rect x="33.0" y="566.5" width="3" height="3" fill="#c01020"/><rect x="21.0" y="576.5" width="3" height="3" fill="#c01020"/></svg>
</body></html>
